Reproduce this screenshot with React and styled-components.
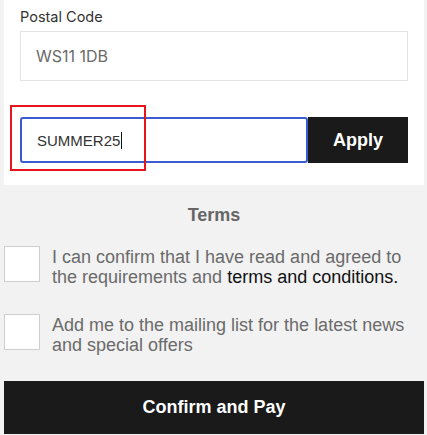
import React from "react";
import styled, { createGlobalStyle } from "styled-components";

const Global = createGlobalStyle`
  body {
    margin: 0;
    background: #f2f2f2;
    font-family: "Liberation Sans", Arial, sans-serif;
  }
`;

const Page = styled.div`
  padding: 0 3px 0 4px;
`;

const Card = styled.div`
  background: #fff;
  padding: 7px 16px 22px;
`;

const Label = styled.div`
  font-family: Inter, "Noto Sans", sans-serif;
  font-size: 14.5px;
  line-height: 20px;
  color: #333;
`;

const PostalInput = styled.div`
  margin-top: 4px;
  height: 48px;
  border: 1px solid #e3e3e3;
  display: flex;
  align-items: center;
  padding-left: 15px;
  font-family: Inter, "Noto Sans", sans-serif;
  font-size: 16px;
  color: #6b6b6b;
`;

const CouponRow = styled.div`
  position: relative;
  margin-top: 36px;
  display: flex;
  height: 46px;
`;

const CouponInput = styled.div`
  flex: 1;
  border: 2px solid #3b5bd3;
  border-radius: 3px;
  display: flex;
  align-items: center;
  padding-left: 15px;
  font-size: 15px;
  color: #333;
`;

const Caret = styled.span`
  display: inline-block;
  width: 1px;
  height: 17px;
  background: #111;
  margin-left: 1px;
`;

const ApplyButton = styled.button`
  width: 100px;
  border: none;
  background: #1a1a1a;
  color: #fff;
  font-family: "Liberation Sans", Arial, sans-serif;
  font-weight: bold;
  font-size: 18px;
  padding: 0;
`;

const Highlight = styled.div`
  position: absolute;
  left: -10px;
  top: -12px;
  width: 136px;
  height: 66px;
  box-sizing: border-box;
  border: 2px solid #e8141b;
  pointer-events: none;
`;

const Heading = styled.div`
  margin-top: 20px;
  text-align: center;
  font-size: 18px;
  line-height: 20px;
  font-weight: bold;
  color: #666;
`;

const CheckRow = styled.div`
  display: flex;
  gap: 12px;
  margin-top: ${(p) => p.$gap}px;
`;

const Box = styled.div`
  flex: none;
  width: 34px;
  height: 34px;
  background: #fff;
  border: 1px solid #cfcfcf;
`;

const CheckText = styled.div`
  padding-top: 1px;
  font-size: 18px;
  line-height: 20px;
  color: #6a6a6a;
`;

const Dark = styled.span`
  color: #111;
`;

const ConfirmButton = styled.button`
  display: block;
  width: 420px;
  height: 53px;
  margin-top: 26px;
  border: none;
  background: #1a1a1a;
  color: #fff;
  font-family: "Liberation Sans", Arial, sans-serif;
  font-weight: bold;
  font-size: 18px;
`;

export default function App() {
  return (
    <>
      <Global />
      <Page>
        <Card>
          <Label>Postal Code</Label>
          <PostalInput>WS11 1DB</PostalInput>
          <CouponRow>
            <CouponInput>
              SUMMER25
              <Caret />
            </CouponInput>
            <ApplyButton>Apply</ApplyButton>
            <Highlight />
          </CouponRow>
        </Card>
        <Heading>Terms</Heading>
        <CheckRow $gap={21}>
          <Box />
          <CheckText>
            I can confirm that I have read and agreed to the requirements and{" "}
            <Dark>terms and conditions.</Dark>
          </CheckText>
        </CheckRow>
        <CheckRow $gap={27}>
          <Box />
          <CheckText>
            Add me to the mailing list for the latest news and special offers
          </CheckText>
        </CheckRow>
        <ConfirmButton>Confirm and Pay</ConfirmButton>
      </Page>
    </>
  );
}
